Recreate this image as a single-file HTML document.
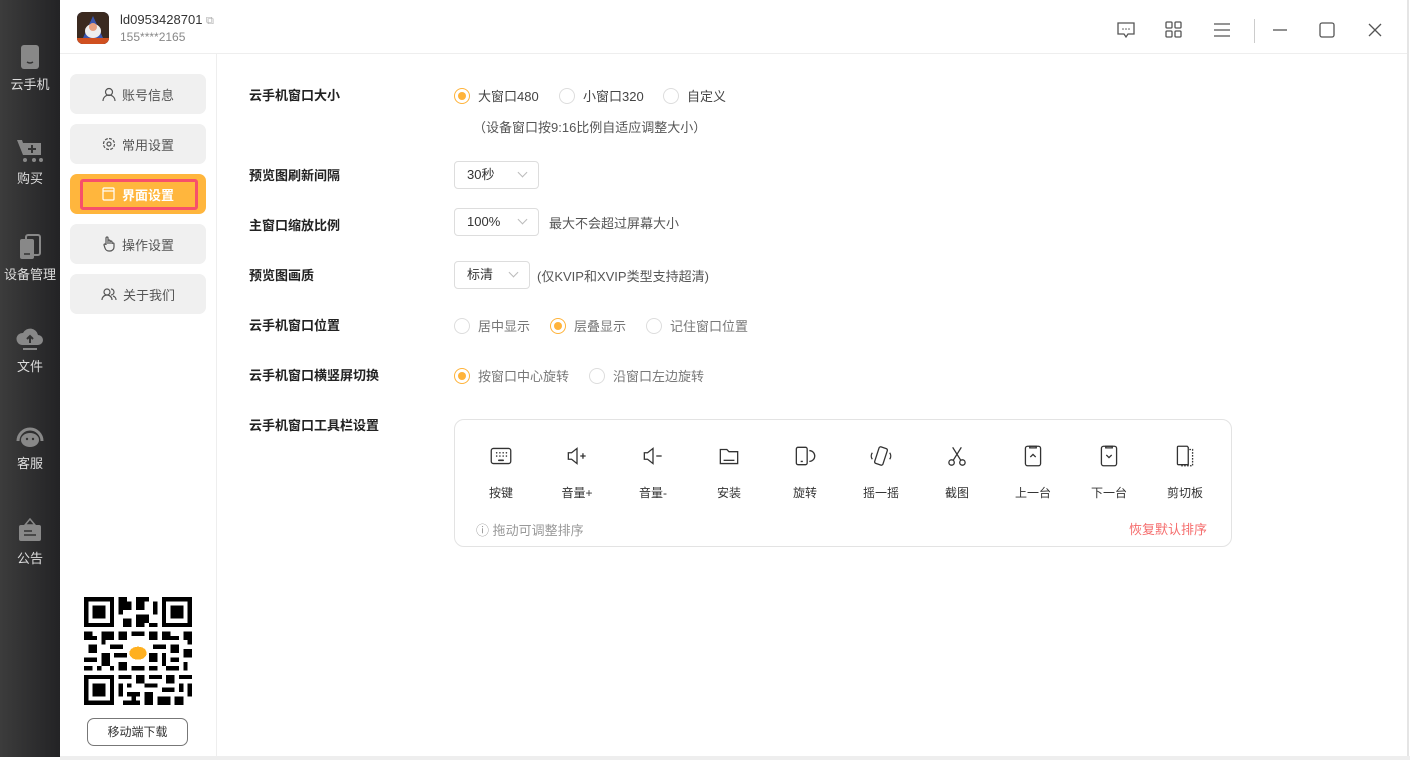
<!DOCTYPE html>
<html><head><meta charset="utf-8"><style>
*{margin:0;padding:0;box-sizing:border-box}
body{width:1410px;height:760px;background:#fff;font-family:"Liberation Sans","Noto Sans CJK SC",sans-serif;position:relative;overflow:hidden;color:#333}
.abs{position:absolute}
.side{left:0;top:0;width:60px;height:757px;background:linear-gradient(90deg,#3c3c3c,#232325)}
.nav{position:absolute;left:0;width:60px;text-align:center;color:#ddd;font-size:13px}
.nav svg{display:block;margin:0 auto 4px}
.menu{position:absolute;left:70px;width:136px;height:40px;background:#f0f0f0;border-radius:7px;font-size:13px;color:#555;display:flex;align-items:center;justify-content:center;gap:6px}
.lbl{position:absolute;left:249px;font-size:13px;font-weight:bold;color:#222}
.radio{position:absolute;display:flex;align-items:center;font-size:13px;color:#777}
.radio i{width:16px;height:16px;border:1px solid #ddd;border-radius:50%;display:inline-block;margin-right:8px;position:relative}
.radio i.on{border-color:#ffb33a}
.radio i.on:after{content:"";position:absolute;left:3px;top:3px;width:8px;height:8px;border-radius:50%;background:#ffb33a}
.sel{position:absolute;left:454px;height:28px;border:1px solid #ddd;border-radius:4px;font-size:13px;color:#333;padding-left:12px;line-height:26px}
.sel:after{content:"";position:absolute;right:12px;top:7px;width:6px;height:6px;border-right:1px solid #bbb;border-bottom:1px solid #bbb;transform:rotate(45deg)}
.tool{position:absolute;top:443px;width:76px;text-align:center;font-size:12px;color:#333}
.tool svg{display:block;margin:0 auto 15px}
</style></head><body>
<div class="abs side"></div>
<div class="nav" style="top:44px"><svg width="20" height="26" viewBox="0 0 20 26"><rect x="1" y="1" width="18" height="24" rx="3" fill="#888"/><path d="M7 18q3 2 6 0" stroke="#333" stroke-width="1.5" fill="none"/></svg>云手机</div>
<div class="nav" style="top:138px"><svg width="30" height="26" viewBox="0 0 30 26"><path d="M2 2h5l1 3h18v12H8z" fill="#888"/><path d="M17 7v8M13 11h8" stroke="#333" stroke-width="2"/><circle cx="10" cy="22" r="2" fill="#888"/><circle cx="19" cy="22" r="2" fill="#888"/><circle cx="26" cy="22" r="2" fill="#888"/></svg>购买</div>
<div class="nav" style="top:234px"><svg width="24" height="26" viewBox="0 0 24 26"><rect x="8" y="1" width="14" height="20" rx="2" fill="none" stroke="#888" stroke-width="2"/><rect x="2" y="5" width="14" height="20" rx="2" fill="#888"/><path d="M6 20h6" stroke="#333" stroke-width="1.5"/></svg>设备管理</div>
<div class="nav" style="top:328px"><svg width="30" height="24" viewBox="0 0 30 24"><path d="M7 17a6 6 0 0 1 1-12a8 8 0 0 1 15 2a5 5 0 0 1 0 10z" fill="#888"/><path d="M15 15V8M12 11l3-3l3 3" stroke="#333" stroke-width="2" fill="none"/><path d="M8 21h14" stroke="#888" stroke-width="2"/></svg>文件</div>
<div class="nav" style="top:423px"><svg width="30" height="26" viewBox="0 0 30 26"><path d="M3 18a12 12 0 0 1 24 0" stroke="#888" stroke-width="3" fill="none"/><ellipse cx="15" cy="17" rx="9" ry="7" fill="#888"/><circle cx="12" cy="16" r="1.2" fill="#333"/><circle cx="18" cy="16" r="1.2" fill="#333"/></svg>客服</div>
<div class="nav" style="top:518px"><svg width="26" height="26" viewBox="0 0 26 26"><path d="M13 1l-5 6h10z" fill="none" stroke="#888" stroke-width="1.5"/><rect x="2" y="7" width="22" height="16" rx="2" fill="#888"/><path d="M7 13h8M7 17h12" stroke="#333" stroke-width="1.5"/></svg>公告</div>

<div class="abs" style="left:60px;top:53px;width:1348px;height:1px;background:#eee"></div>
<div class="abs" style="left:1407px;top:0;width:2px;height:760px;background:#e5e5e5"></div>
<div class="abs" style="left:60px;top:756px;width:1350px;height:4px;background:#eee"></div>
<div class="abs" style="left:77px;top:12px;width:32px;height:32px;border-radius:6px;overflow:hidden;background:#2b3a70">
<svg width="32" height="32" viewBox="0 0 32 32"><path d="M0 0h32v32H0z" fill="#3b2a20"/><path d="M6 26L16 4l10 22z" fill="#3a56b0"/><ellipse cx="16" cy="19" rx="8" ry="7" fill="#eee"/><circle cx="16" cy="15" r="4" fill="#e8a080"/><rect x="0" y="26" width="32" height="6" fill="#d05020"/></svg></div>
<div class="abs" style="left:120px;top:12px;font-size:13px;color:#333">ld0953428701 <span style="color:#aaa;font-size:11px">⧉</span></div>
<div class="abs" style="left:120px;top:30px;font-size:12px;color:#888">155****2165</div>
<svg class="abs" style="left:1116px;top:20px" width="20" height="20" viewBox="0 0 20 20" fill="none" stroke="#555" stroke-width="1.3"><path d="M2 3h16v11h-6l-2 3l-2-3H2z"/><path d="M7 9h0M10 9h0M13 9h0" stroke-linecap="round" stroke-width="1.6"/></svg>
<svg class="abs" style="left:1164px;top:20px" width="20" height="20" viewBox="0 0 20 20" fill="none" stroke="#555" stroke-width="1.3"><rect x="2" y="2" width="6" height="6" rx="1"/><rect x="11" y="2" width="6" height="6" rx="1"/><rect x="2" y="11" width="6" height="6" rx="1"/><rect x="11" y="11" width="6" height="6" rx="1"/></svg>
<svg class="abs" style="left:1212px;top:20px" width="20" height="20" viewBox="0 0 20 20" stroke="#555" stroke-width="1.3"><path d="M2 4h16M2 10h16M2 16h16"/></svg>
<div class="abs" style="left:1254px;top:19px;width:1px;height:24px;background:#ccc"></div>
<svg class="abs" style="left:1270px;top:20px" width="20" height="20" stroke="#555" stroke-width="1.3"><path d="M3 10h14"/></svg>
<svg class="abs" style="left:1317px;top:20px" width="20" height="20" fill="none" stroke="#555" stroke-width="1.3"><rect x="3" y="3" width="14" height="14" rx="2"/></svg>
<svg class="abs" style="left:1365px;top:20px" width="20" height="20" stroke="#555" stroke-width="1.3"><path d="M4 4l12 12M16 4L4 16"/></svg>

<div class="abs" style="left:216px;top:54px;width:1px;height:703px;background:#eee"></div>
<div class="menu" style="top:74px"><svg width="14" height="14" fill="none" stroke="#555" stroke-width="1.2"><circle cx="7" cy="5" r="3.5"/><path d="M1 14a6 6 0 0 1 12 0"/></svg>账号信息</div>
<div class="menu" style="top:124px"><svg width="14" height="14" fill="none" stroke="#555" stroke-width="1.2"><circle cx="7" cy="7" r="5.5" stroke-dasharray="3 1.3"/><circle cx="7" cy="7" r="2"/></svg>常用设置</div>
<div class="menu" style="top:174px;background:#ffb63d;color:#fff;font-weight:bold"><div style="position:absolute;left:10px;top:5px;width:118px;height:31px;border:3px solid #f7506a;border-radius:3px"></div><svg width="14" height="14" fill="none" stroke="#fff" stroke-width="1.2"><rect x="1" y="1" width="11" height="12" rx="1"/><path d="M1 4h11"/></svg>界面设置</div>
<div class="menu" style="top:224px"><svg width="14" height="16" fill="none" stroke="#555" stroke-width="1.2"><path d="M4 9V2a1 1 0 0 1 2 0v6V5a1 1 0 0 1 2 0v3V6a1 1 0 0 1 2 0v2a1 1 0 0 1 2 0v3a4 4 0 0 1-4 4H7a4 4 0 0 1-4-3L2 9a1 1 0 0 1 2 0"/></svg>操作设置</div>
<div class="menu" style="top:274px"><svg width="16" height="14" fill="none" stroke="#555" stroke-width="1.2"><circle cx="6" cy="5" r="3"/><path d="M1 13a5 5 0 0 1 10 0M10 2a3 3 0 0 1 0 6M12 9a4 4 0 0 1 3 4"/></svg>关于我们</div>

<svg class="abs" style="left:84px;top:597px" width="108" height="108" viewBox="0 0 25 25" shape-rendering="crispEdges">
<rect width="25" height="25" fill="#fff"/>
<g fill="#000"><path d="M0 0h7v7H0zM18 0h7v7h-7zM0 18h7v7H0z"/></g>
<g fill="#fff"><path d="M1 1h5v5H1zM19 1h5v5h-5zM1 19h5v5H1z"/></g>
<g fill="#000"><path d="M2 2h3v3H2zM20 2h3v3h-3zM2 20h3v3H2z"/>
<path d="M8 0h2v1h1v2H9v1H8zM12 0h3v1h-1v2h-2zM16 1h1v3h-1zM9 5h2v2H9zM12 4h3v2h-1v1h-2zM15 6h2v1h-2z"/>
<path d="M0 8h2v1h1v1H0zM4 8h3v2H5v1H4zM8 8h2v2H8zM11 8h3v1h-3zM15 8h2v2h-2zM18 8h2v1h2v1h-4zM23 8h2v3h-1v-1h-1z"/>
<path d="M1 11h2v2H1zM6 11h3v1H6zM10 10h2v2h-2zM13 10h1v3h-1zM16 11h3v1h-3zM20 11h2v2h-2zM23 12h2v2h-2z"/>
<path d="M0 14h3v1H0zM4 13h2v3H4zM7 13h3v1H7zM8 15h2v2H8zM15 13h2v2h-2zM18 13h1v3h-1zM20 14h2v1h-2zM23 15h1v2h-1z"/>
<path d="M0 16h2v1H0zM3 16h1v1H3zM6 16h1v1H6zM11 16h3v1h-3zM15 16h2v1h-2zM19 16h3v1h-3z"/>
<path d="M8 18h3v1H8zM12 18h2v2h-2zM15 18h3v1h-3zM19 18h2v2h-2zM22 18h3v1h-3zM8 20h1v3H8zM10 20h1v1h-1zM14 20h3v1h-3zM18 21h3v1h-3zM22 20h1v2h-1zM24 20h1v3h-1z"/>
<path d="M10 22h3v1h-3zM14 22h2v3h-2zM17 23h3v2h-3zM21 23h2v2h-2zM9 24h4v1H9zM11 23h1v1h-1z"/>
</g>
<rect x="10" y="10" width="5" height="5" fill="#fff"/>
<ellipse cx="12.5" cy="13" rx="2" ry="1.5" fill="#ffb020"/>
</svg>
<div class="abs" style="left:87px;top:718px;width:101px;height:28px;border:1px solid #777;border-radius:7px;font-size:12px;text-align:center;line-height:26px;color:#333">移动端下载</div>

<div class="lbl" style="top:87px;margin-top:-2px">云手机窗口大小</div>
<div class="radio" style="left:454px;top:86px;color:#444"><i class="on"></i>大窗口480</div>
<div class="radio" style="left:559px;top:86px;color:#444"><i></i>小窗口320</div>
<div class="radio" style="left:663px;top:86px;color:#444"><i></i>自定义</div>
<div class="abs" style="left:473px;top:117px;font-size:13px;color:#555">（设备窗口按9:16比例自适应调整大小）</div>

<div class="lbl" style="top:165px">预览图刷新间隔</div>
<div class="sel" style="top:161px;width:85px">30秒</div>
<div class="lbl" style="top:215px">主窗口缩放比例</div>
<div class="sel" style="top:208px;width:85px">100%</div>
<div class="abs" style="left:549px;top:213px;font-size:13px;color:#555">最大不会超过屏幕大小</div>
<div class="lbl" style="top:265px">预览图画质</div>
<div class="sel" style="top:261px;width:76px">标清</div>
<div class="abs" style="left:537px;top:266px;font-size:13px;color:#555">(仅KVIP和XVIP类型支持超清)</div>

<div class="lbl" style="top:315px">云手机窗口位置</div>
<div class="radio" style="left:454px;top:316px"><i></i>居中显示</div>
<div class="radio" style="left:550px;top:316px"><i class="on"></i>层叠显示</div>
<div class="radio" style="left:646px;top:316px"><i></i>记住窗口位置</div>
<div class="lbl" style="top:365px">云手机窗口横竖屏切换</div>
<div class="radio" style="left:454px;top:366px"><i class="on"></i>按窗口中心旋转</div>
<div class="radio" style="left:589px;top:366px"><i></i>沿窗口左边旋转</div>
<div class="lbl" style="top:415px">云手机窗口工具栏设置</div>

<div class="abs" style="left:454px;top:419px;width:778px;height:128px;border:1px solid #e3e3e3;border-radius:10px"></div>
<div class="tool" style="left:463px"><svg width="26" height="26" viewBox="0 0 24 24" fill="none" stroke="#333" stroke-width="1.2"><rect x="3" y="5" width="18" height="14" rx="2"/><path d="M8 9h0M11 9h0M14 9h0M17 9h0M8 12h0M11 12h0M14 12h0M17 12h0M10 16h4" stroke-linecap="round" stroke-width="1.5"/></svg>按键</div>
<div class="tool" style="left:539px"><svg width="26" height="26" viewBox="0 0 24 24" fill="none" stroke="#333" stroke-width="1.2"><path d="M4 9h3l5-4v14l-5-4H4z"/><path d="M15 12h5M17.5 9.5v5"/></svg>音量+</div>
<div class="tool" style="left:615px"><svg width="26" height="26" viewBox="0 0 24 24" fill="none" stroke="#333" stroke-width="1.2"><path d="M4 9h3l5-4v14l-5-4H4z"/><path d="M15 12h5"/></svg>音量-</div>
<div class="tool" style="left:691px"><svg width="26" height="26" viewBox="0 0 24 24" fill="none" stroke="#333" stroke-width="1.2"><path d="M4 6h6l2 2h8v11H4z"/><path d="M7 16h10"/></svg>安装</div>
<div class="tool" style="left:767px"><svg width="26" height="26" viewBox="0 0 24 24" fill="none" stroke="#333" stroke-width="1.2"><rect x="4" y="4" width="10" height="16" rx="1.5"/><path d="M8 17h2M16 7a4 4 0 0 1 0 10"/></svg>旋转</div>
<div class="tool" style="left:843px"><svg width="26" height="26" viewBox="0 0 24 24" fill="none" stroke="#333" stroke-width="1.2"><rect x="8" y="4" width="8" height="16" rx="1.5" transform="rotate(18 12 12)"/><path d="M4 9a5 5 0 0 0 0 6M20 9a5 5 0 0 1 0 6"/></svg>摇一摇</div>
<div class="tool" style="left:919px"><svg width="26" height="26" viewBox="0 0 24 24" fill="none" stroke="#333" stroke-width="1.2"><circle cx="7" cy="18" r="2.5"/><circle cx="17" cy="18" r="2.5"/><path d="M8.5 16L16 4M15.5 16L8 4"/></svg>截图</div>
<div class="tool" style="left:995px"><svg width="26" height="26" viewBox="0 0 24 24" fill="none" stroke="#333" stroke-width="1.2"><rect x="5" y="3" width="14" height="18" rx="2"/><path d="M9 3h6v1.5H9zM9.5 13l2.5-2.5l2.5 2.5"/></svg>上一台</div>
<div class="tool" style="left:1071px"><svg width="26" height="26" viewBox="0 0 24 24" fill="none" stroke="#333" stroke-width="1.2"><rect x="5" y="3" width="14" height="18" rx="2"/><path d="M9 3h6v1.5H9zM9.5 11l2.5 2.5l2.5-2.5"/></svg>下一台</div>
<div class="tool" style="left:1147px"><svg width="26" height="26" viewBox="0 0 24 24" fill="none" stroke="#333" stroke-width="1.2"><path d="M6 3h8l1 1v16H6a1 1 0 0 1-1-1V4a1 1 0 0 1 1-1z"/><path d="M16 6h3v15h-11" stroke-dasharray="1.5 1.2"/></svg>剪切板</div>
<div class="abs" style="left:476px;top:520px;font-size:13px;color:#999">ⓘ 拖动可调整排序</div>
<div class="abs" style="left:1129px;top:519px;font-size:13px;color:#f56c6c">恢复默认排序</div>
</body></html>
